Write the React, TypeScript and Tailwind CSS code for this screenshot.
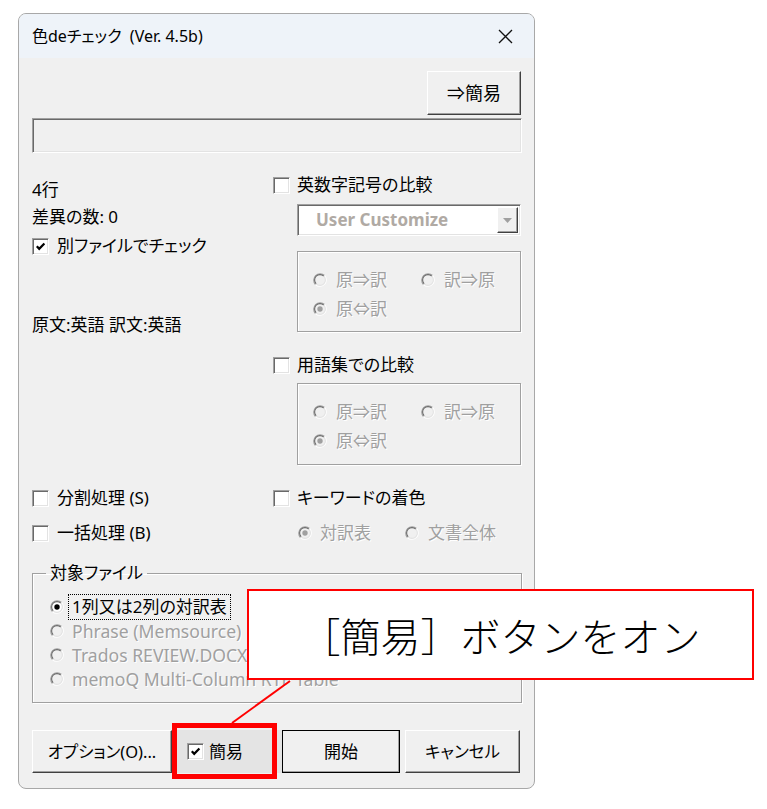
import React from 'react';

const FONT = "font-['Noto_Sans','Noto_Sans_CJK_JP',sans-serif] [font-feature-settings:'palt']";
const DISABLED = 'text-[#a0a0a0] [text-shadow:1px_1px_0_#ffffff]';
const RAISED = 'bg-[#f0f0f0] border border-t-white border-l-white border-r-[#404040] border-b-[#404040] shadow-[inset_-1px_-1px_0_#a0a0a0]';
const SUNKEN = 'border border-t-[#a0a0a0] border-l-[#a0a0a0] border-r-white border-b-white shadow-[inset_1px_1px_0_#696969,inset_-1px_-1px_0_#e3e3e3]';
const ETCHED = 'border border-[#a0a0a0] shadow-[inset_1px_1px_0_#ffffff,1px_1px_0_#ffffff]';

const CheckBox = ({ checked = false }: { checked?: boolean }) => (
    <span className={`w-[17px] h-[17px] flex-shrink-0 bg-white flex items-center justify-center ${SUNKEN}`}>
        {checked && (
            <svg width="11" height="11" viewBox="0 0 11 11">
                <path d="M1.8 5.2 L4.2 7.8 L9.4 2.4" fill="none" stroke="#000" strokeWidth="2.2" />
            </svg>
        )}
    </span>
);

const Radio = ({ checked = false, disabled = false }: { checked?: boolean; disabled?: boolean }) => (
    <svg width="14" height="14" viewBox="0 0 13 13" className="flex-shrink-0">
        <circle cx="6.5" cy="6.5" r="4.6" fill={disabled ? '#f0f0f0' : '#ffffff'} />
        <path d="M2.26 10.74A6 6 0 0 1 10.74 2.26" fill="none" stroke="#a0a0a0" />
        <path d="M10.74 2.26A6 6 0 0 1 2.26 10.74" fill="none" stroke="#ffffff" />
        <path d="M2.96 10.04A5 5 0 0 1 10.04 2.96" fill="none" stroke="#696969" />
        <path d="M10.04 2.96A5 5 0 0 1 2.96 10.04" fill="none" stroke="#e3e3e3" />
        {checked && <circle cx="6.5" cy="6.5" r="2.5" fill={disabled ? '#a0a0a0' : '#000000'} />}
    </svg>
);

const DirGroup = ({ h }: { h: string }) => (
    <div className={`ml-[24px] w-[224px] ${h} ${ETCHED} pt-[16px] pl-[15px]`}>
        <div className="flex">
            <div className="w-[108px] h-[24px] flex items-center gap-[9px]">
                <Radio disabled />
                <span className={DISABLED}>原⇒訳</span>
            </div>
            <div className="h-[24px] flex items-center gap-[9px]">
                <Radio disabled />
                <span className={DISABLED}>訳⇒原</span>
            </div>
        </div>
        <div className="mt-[5px] h-[24px] flex items-center gap-[9px]">
            <Radio disabled checked />
            <span className={DISABLED}>原⇔訳</span>
        </div>
    </div>
);

const TARGETS = [
    { label: '1列又は2列の対訳表', active: true },
    { label: 'Phrase (Memsource) MXLIFF', active: false },
    { label: 'Trados REVIEW.DOCX', active: false },
    { label: 'memoQ Multi-Column RTF Table', active: false },
];

export default function App() {
    return (
        <div className={`relative w-[767px] h-[809px] bg-white overflow-hidden pt-[13px] pl-[18px] ${FONT}`}>
            <div className="w-[517px] h-[776px] border border-[#a8a8a8] rounded-[8px] overflow-hidden bg-[#f0f0f0] flex flex-col">
                {/* title bar */}
                <div className="h-[44px] flex-shrink-0 bg-[#eef3f9] flex items-center justify-between pl-[13px] pr-[21px] text-[16px] text-black">
                    <span>色deチェック&nbsp; (Ver. 4.5b)</span>
                    <svg width="15" height="15" viewBox="0 0 15 15">
                        <path d="M1 1 L14 14 M14 1 L1 14" stroke="#111" strokeWidth="1.3" />
                    </svg>
                </div>

                <div className="flex-1 flex flex-col pl-[13px] pr-[12px] text-[17px] text-black leading-[24px]">
                    <div className="flex justify-end mt-[13px] pr-[1px]">
                        <button className={`w-[94px] h-[44px] flex items-center justify-center text-[18px] ${RAISED}`}>⇒簡易</button>
                    </div>
                    <div className={`mt-[3px] h-[35px] bg-[#f0f0f0] ${SUNKEN}`} />

                    {/* two columns */}
                    <div className="flex">
                        <div className="w-[241px] flex flex-col">
                            <div className="mt-[25px] h-[24px]">4行</div>
                            <div className="mt-[3px] h-[24px]">差異の数: 0</div>
                            <div className="mt-[5px] h-[24px] flex items-center gap-[8px]">
                                <CheckBox checked />
                                <span>別ファイルでチェック</span>
                            </div>
                            <div className="mt-[55px] h-[24px]">原文:英語 訳文:英語</div>
                        </div>
                        <div className="w-[249px] flex flex-col">
                            <div className="mt-[20px] h-[24px] flex items-center gap-[7px]">
                                <CheckBox />
                                <span>英数字記号の比較</span>
                            </div>
                            <div className={`mt-[7px] ml-[24px] w-[224px] h-[32px] bg-white flex items-stretch p-[2px] ${SUNKEN}`}>
                                <span className="flex-1 pl-[16px] flex items-center text-[17px] font-bold text-[#b0aaa4]">User Customize</span>
                                <span className={`w-[21px] flex items-center justify-center ${RAISED}`}>
                                    <svg width="9" height="5" viewBox="0 0 9 5">
                                        <path d="M0 0 H9 L4.5 5 Z" fill="#a0a0a0" />
                                    </svg>
                                </span>
                            </div>
                            <div className="mt-[15px]">
                                <DirGroup h="h-[81px]" />
                            </div>
                            <div className="mt-[21px] h-[24px] flex items-center gap-[7px]">
                                <CheckBox />
                                <span>用語集での比較</span>
                            </div>
                            <div className="mt-[6px]">
                                <DirGroup h="h-[82px]" />
                            </div>
                        </div>
                    </div>

                    {/* option rows */}
                    <div className="grid grid-cols-[241px_249px] mt-[21px]">
                        <div className="h-[24px] flex items-center gap-[8px]">
                            <CheckBox />
                            <span>分割処理 (S)</span>
                        </div>
                        <div className="h-[24px] flex items-center gap-[7px]">
                            <CheckBox />
                            <span>キーワードの着色</span>
                        </div>
                    </div>
                    <div className="grid grid-cols-[241px_249px] mt-[11px]">
                        <div className="h-[24px] flex items-center gap-[8px]">
                            <CheckBox />
                            <span>一括処理 (B)</span>
                        </div>
                        <div className="h-[24px] flex items-center pl-[25px]">
                            <div className="w-[107px] flex items-center gap-[8px]">
                                <Radio disabled checked />
                                <span className={DISABLED}>対訳表</span>
                            </div>
                            <div className="flex items-center gap-[9px]">
                                <Radio disabled />
                                <span className={DISABLED}>文書全体</span>
                            </div>
                        </div>
                    </div>

                    {/* target file group */}
                    <fieldset className={`mt-[16px] h-[142px] ${ETCHED}`}>
                        <legend className="ml-[13px] px-[4px] h-[24px] leading-[24px]">対象ファイル</legend>
                        <div className="pt-[10px] pl-[17px]">
                            {TARGETS.map((t) => (
                                <div key={t.label} className="h-[24px] flex items-center gap-[4px]">
                                    <Radio checked={t.active} disabled={!t.active} />
                                    <span
                                        className={`h-[26px] px-[3px] border leading-[24px] whitespace-nowrap ${
                                            t.active
                                                ? 'border-dotted border-black text-black'
                                                : `text-[17.6px] border-transparent ${DISABLED}`
                                        }`}
                                    >
                                        {t.label}
                                    </span>
                                </div>
                            ))}
                        </div>
                    </fieldset>

                    {/* bottom buttons */}
                    <div className="mt-[27px] flex h-[43px]">
                        <button className={`w-[140px] h-[43px] flex items-center justify-center text-[16.5px] ${RAISED}`}>オプション(O)...</button>
                        <div className="w-[110px] h-[43px] bg-[#e4e4e4] flex items-center gap-[5px] pl-[15px]">
                            <CheckBox checked />
                            <span>簡易</span>
                        </div>
                        <button className={`w-[118px] h-[43px] flex items-center justify-center outline outline-1 outline-black -outline-offset-1 ${RAISED}`}>開始</button>
                        <button className={`ml-[5px] w-[115px] h-[43px] flex items-center justify-center text-[16.5px] ${RAISED}`}>キャンセル</button>
                    </div>
                </div>
            </div>

            {/* annotation overlays */}
            <svg className="absolute left-0 top-0 pointer-events-none" width="767" height="809">
                <line x1="290" y1="681" x2="232" y2="723" stroke="#ff0000" strokeWidth="2" />
            </svg>
            <div className="absolute left-[172px] top-[723px] w-[105px] h-[56px] border-[5px] border-[#ff0000]" />
            <div className="absolute left-[247px] top-[589px] w-[507px] h-[91px] border-2 border-[#ff0000] bg-white flex items-center justify-center">
                <span className="text-[40px] font-light text-black font-['Noto_Sans_CJK_JP',sans-serif] [font-feature-settings:normal] leading-none">［簡易］ボタンをオン</span>
            </div>
        </div>
    );
}
